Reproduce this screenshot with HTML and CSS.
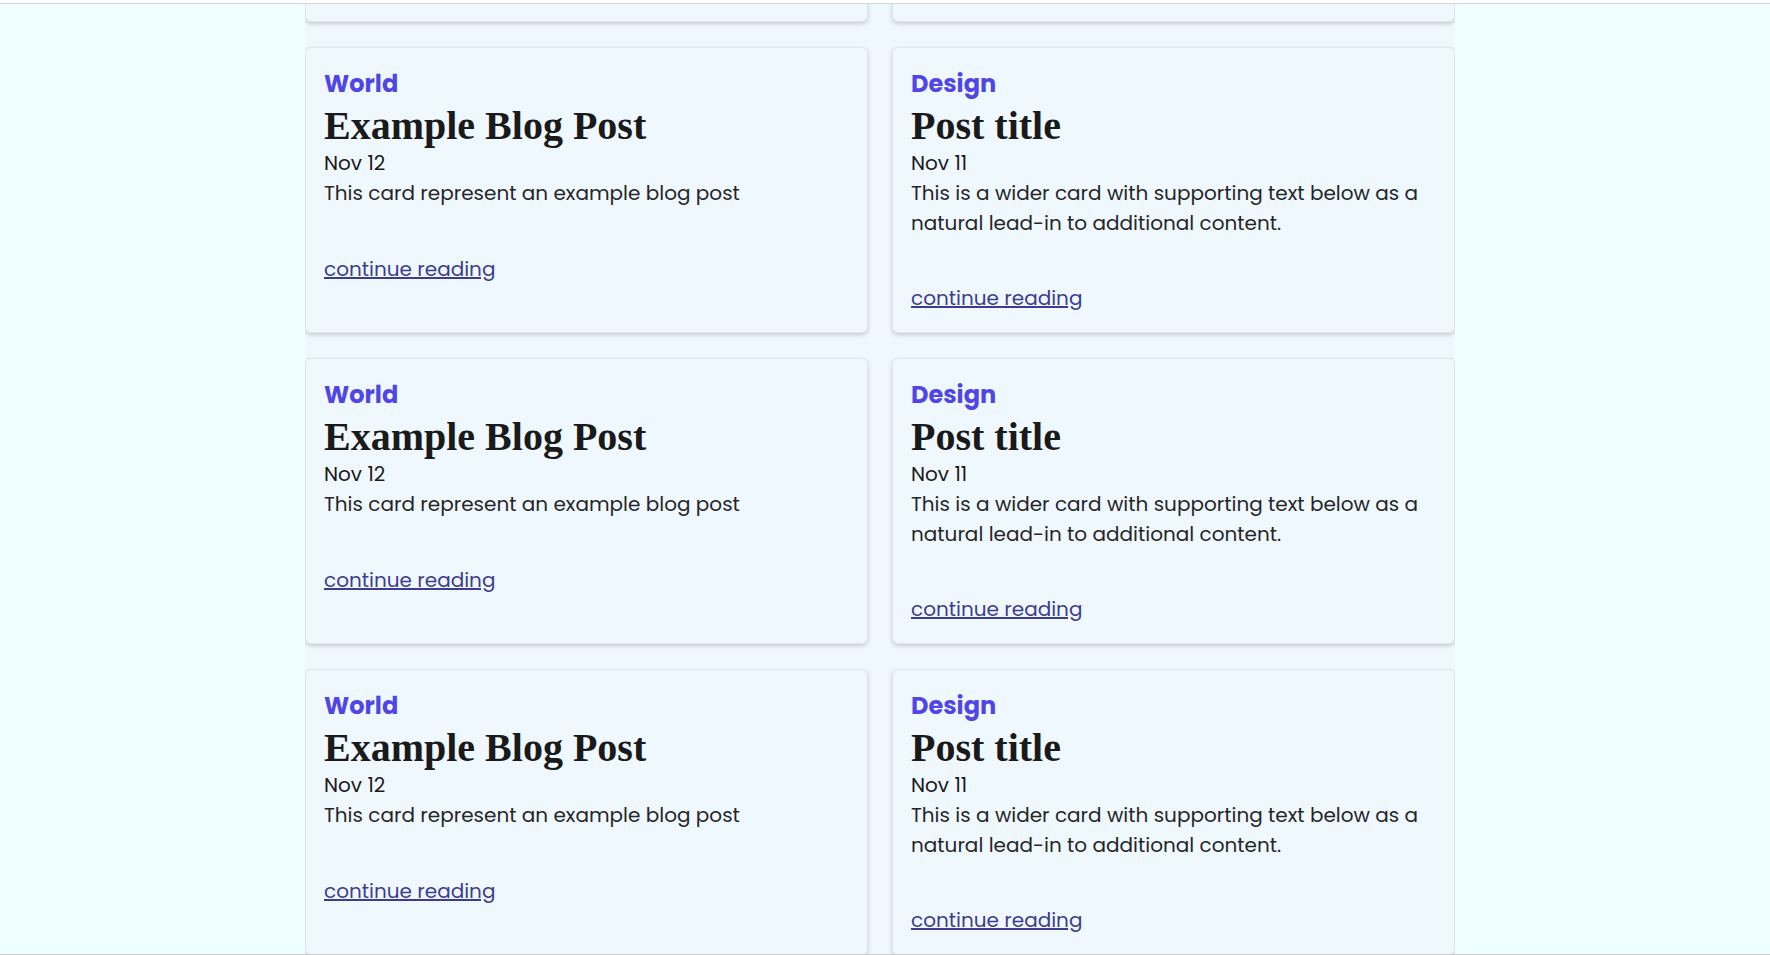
FILE: index.html
```html
<!DOCTYPE html>
<html lang="en">
<head>
    <meta charset="UTF-8">
    <meta name="viewport" content="width=device-width, initial-scale=1.0">
    <title>Blog</title>
    <link rel="stylesheet" href="styles.css">
</head>
<body>
    <div class="page">
        <main class="posts">
            <div class="post-grid">
                <!-- row scrolled mostly out of view -->
                <article class="card">
                    <span class="category">World</span>
                    <h2>Example Blog Post</h2>
                    <div class="date">Nov 12</div>
                    <p class="summary">This card represent an example blog post</p>
                    <a href="#">continue reading</a>
                </article>
                <article class="card">
                    <span class="category">Design</span>
                    <h2>Post title</h2>
                    <div class="date">Nov 11</div>
                    <p class="summary">This is a wider card with supporting text below as a natural lead-in to additional content.</p>
                    <a href="#">continue reading</a>
                </article>

                <article class="card">
                    <span class="category">World</span>
                    <h2>Example Blog Post</h2>
                    <div class="date">Nov 12</div>
                    <p class="summary">This card represent an example blog post</p>
                    <a href="#">continue reading</a>
                </article>
                <article class="card">
                    <span class="category">Design</span>
                    <h2>Post title</h2>
                    <div class="date">Nov 11</div>
                    <p class="summary">This is a wider card with supporting text below as a natural lead-in to additional content.</p>
                    <a href="#">continue reading</a>
                </article>

                <article class="card">
                    <span class="category">World</span>
                    <h2>Example Blog Post</h2>
                    <div class="date">Nov 12</div>
                    <p class="summary">This card represent an example blog post</p>
                    <a href="#">continue reading</a>
                </article>
                <article class="card">
                    <span class="category">Design</span>
                    <h2>Post title</h2>
                    <div class="date">Nov 11</div>
                    <p class="summary">This is a wider card with supporting text below as a natural lead-in to additional content.</p>
                    <a href="#">continue reading</a>
                </article>

                <article class="card">
                    <span class="category">World</span>
                    <h2>Example Blog Post</h2>
                    <div class="date">Nov 12</div>
                    <p class="summary">This card represent an example blog post</p>
                    <a href="#">continue reading</a>
                </article>
                <article class="card">
                    <span class="category">Design</span>
                    <h2>Post title</h2>
                    <div class="date">Nov 11</div>
                    <p class="summary">This is a wider card with supporting text below as a natural lead-in to additional content.</p>
                    <a href="#">continue reading</a>
                </article>
            </div>
        </main>
    </div>
</body>
</html>
```

FILE: styles.css
```css
    body {
        margin: 0;
        padding-top: 3px;
        background-color: #ffffff;
        font-family: "Poppins", "Open Sans", sans-serif;
        color: #222222;
    }
    .page {
        height: 950px;
        background-color: #f0ffff; /* azure */
        border-top: 1px solid #d6d8d8;
        border-bottom: 1px solid #c8cccc;
        overflow: hidden;
        padding-right: 10px; /* room the old scrollbar took */
    }
    .posts {
        width: 1150px;
        height: 100%;
        margin: 0 auto;
        background-color: #f0f8ff; /* aliceblue */
        overflow: hidden;
    }
    .post-grid {
        display: grid;
        grid-template-columns: 1fr 1fr;
        grid-auto-rows: 286px;
        gap: 25px 24px;
        margin-top: -268px; /* page is scrolled down a bit */
    }
    .card {
        display: flex;
        flex-direction: column;
        align-items: flex-start;
        padding: 18px 18px 16px;
        background-color: #f0f8ff;
        border: 1px solid #e2e6ea;
        border-radius: 6px;
        box-shadow: 0 2px 4px rgba(0, 0, 0, 0.18);
    }
    .category {
        font-size: 24px;
        font-weight: bold;
        line-height: 36px;
        color: #4f46e5;
    }
    .card h2 {
        margin: 0;
        font-family: "Liberation Serif", "Times New Roman", serif;
        font-size: 40px;
        font-weight: bold;
        line-height: 48px;
        color: #1a1a1a;
    }
    .date {
        font-size: 20px;
        line-height: 26px;
        color: #1a1a1a;
    }
    .summary {
        margin: 3px 0 45px 0;
        font-size: 20px;
        line-height: 29.5px;
        color: #262626;
    }
    .card a {
        font-size: 20px;
        line-height: 30px;
        color: #3d3d8f;
    }
```
